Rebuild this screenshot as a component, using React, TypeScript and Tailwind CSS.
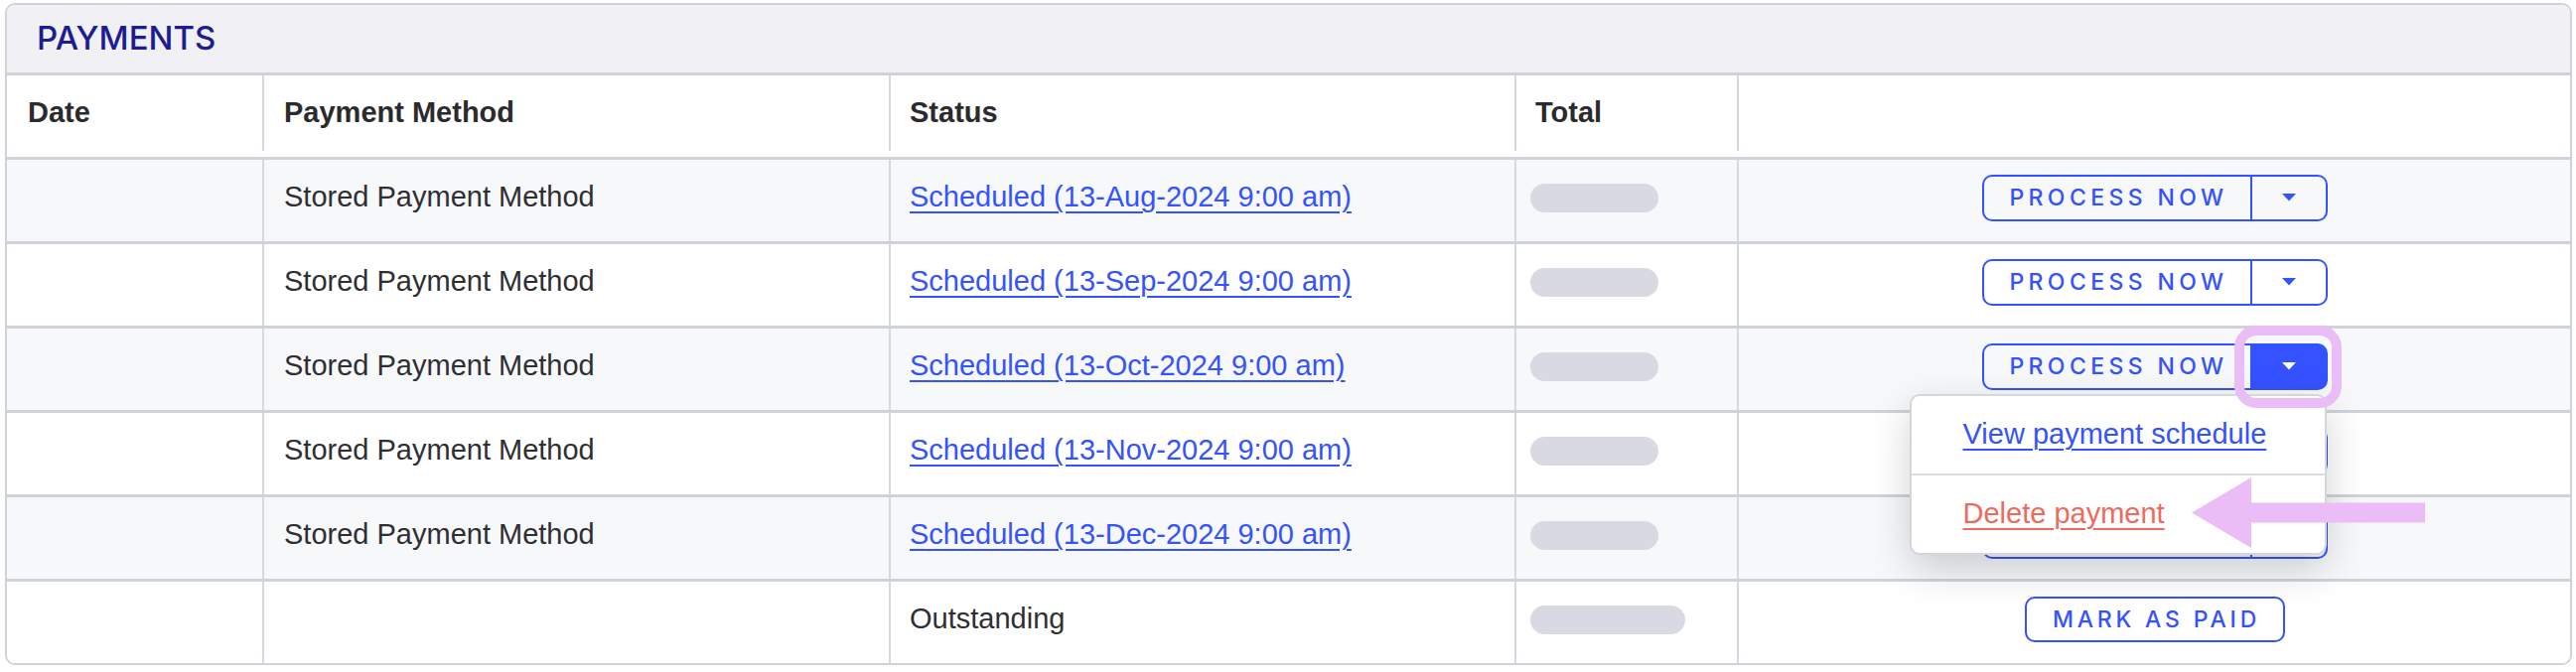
import React from 'react';

type Row = {
  method: string;
  status: string;
  scheduled: boolean;
  open?: boolean;
};

const rows: Row[] = [
  { method: 'Stored Payment Method', status: 'Scheduled (13-Aug-2024 9:00 am)', scheduled: true },
  { method: 'Stored Payment Method', status: 'Scheduled (13-Sep-2024 9:00 am)', scheduled: true },
  { method: 'Stored Payment Method', status: 'Scheduled (13-Oct-2024 9:00 am)', scheduled: true, open: true },
  { method: 'Stored Payment Method', status: 'Scheduled (13-Nov-2024 9:00 am)', scheduled: true },
  { method: 'Stored Payment Method', status: 'Scheduled (13-Dec-2024 9:00 am)', scheduled: true },
  { method: '', status: 'Outstanding', scheduled: false },
];

const Caret = () => (
  <svg width="14" height="8" viewBox="0 0 14 8">
    <path d="M0 0H14L7 7.5Z" fill="currentColor" />
  </svg>
);

const ProcessButton: React.FC<{ open?: boolean }> = ({ open }) => (
  <div className="relative flex h-[47px]">
    <button className="h-full w-[272px] rounded-l-[10px] border-2 border-[#3452ff] pl-[4px] font-['Inter',sans-serif] text-[23px] font-medium tracking-[4.4px] text-[#3452ff]">
      PROCESS NOW
    </button>
    <button
      className={`flex h-full w-[76px] items-center justify-center rounded-r-[10px] border-2 border-l-0 border-[#3452ff] ${
        open ? 'bg-[#3452ff] text-white' : 'text-[#3452ff]'
      }`}
    >
      <Caret />
    </button>

    {open && (
      <>
        {/* dropdown menu */}
        <div className="absolute right-[1px] top-[51px] z-10 h-[162px] w-[420px] rounded-[10px] border-2 border-[#d3d6db] bg-white shadow-[0_14px_40px_rgba(0,0,0,0.18)]">
          <div className="flex h-[78px] items-center pl-[52px]">
            <span className="text-[29px] text-[#3452ff] underline decoration-2 underline-offset-[5px]">
              View payment schedule
            </span>
          </div>
          <div className="flex h-[80px] items-center border-t-2 border-[#d8dce2] pl-[52px]">
            <span className="text-[29px] text-[#ee6a5e] underline decoration-2 underline-offset-[5px]">
              Delete payment
            </span>
          </div>
          {/* annotation arrow */}
          <svg
            className="absolute left-[282px] top-[82px]"
            width="235"
            height="71"
            viewBox="0 0 235 71"
          >
            <path d="M0 35.5L60 0V25.5H235V45.5H60V71Z" fill="#ebbdf6" />
          </svg>
        </div>
        {/* highlight ring */}
        <div className="pointer-events-none absolute left-[254px] top-[-18px] z-20 h-[83px] w-[108px] rounded-[22px] border-[10px] border-[#ebbdf6]" />
      </>
    )}
  </div>
);

export default function App() {
  return (
    <div className="h-[677px] w-[2594px] bg-white pl-[5px] pr-[4px] pt-[3px] font-['Liberation_Sans',Arial,sans-serif] text-[#2f2f33]">
      <div className="rounded-[10px] border-2 border-[#cfd3d9]">
        {/* title band */}
        <div className="flex h-[71px] items-center rounded-t-[8px] border-b-[3px] border-[#cfd3d9] bg-[#f0f0f5] pl-[30px]">
          <h2 className="font-['Inter',sans-serif] text-[33px] font-medium text-[#1d1d8f]">PAYMENTS</h2>
        </div>

        {/* header row */}
        <div className="grid h-[82px] grid-cols-[259px_631px_630px_224px_1fr] bg-white pb-[6px] text-[29px] font-bold text-[#2b2b2e]">
          <div className="flex items-center border-r-2 border-[#d5d8de] pl-[21px]">Date</div>
          <div className="flex items-center border-r-2 border-[#d5d8de] pl-[20px]">Payment Method</div>
          <div className="flex items-center border-r-2 border-[#d5d8de] pl-[19px]">Status</div>
          <div className="flex items-center border-r-2 border-[#d5d8de] pl-[19px]">Total</div>
          <div />
        </div>

        {rows.map((r, i) => (
          <div
            key={i}
            className={`grid h-[85px] grid-cols-[259px_631px_630px_224px_1fr] border-t-[3px] border-[#cfd3d9] text-[29px] ${
              i % 2 === 0 ? 'bg-[#f7f8fa]' : 'bg-white'
            } ${i === rows.length - 1 ? 'rounded-b-[8px]' : ''}`}
          >
            <div className="border-r-2 border-[#d5d8de]" />
            <div className="flex items-center border-r-2 border-[#d5d8de] pb-[6px] pl-[20px]">{r.method}</div>
            <div className="flex items-center border-r-2 border-[#d5d8de] pb-[6px] pl-[19px]">
              {r.scheduled ? (
                <a className="text-[#3452ff] underline decoration-2 underline-offset-[5px]">{r.status}</a>
              ) : (
                <span>{r.status}</span>
              )}
            </div>
            <div className="flex items-center border-r-2 border-[#d5d8de] pb-[6px] pl-[14px]">
              <div
                className={`h-[29px] rounded-full bg-[#d9d9e4] ${r.scheduled ? 'w-[129px]' : 'w-[156px]'}`}
              />
            </div>
            <div className="flex items-center justify-center pb-[6px]">
              {r.scheduled ? (
                <ProcessButton open={r.open} />
              ) : (
                <button className="h-[46px] w-[262px] rounded-[10px] border-2 border-[#3452ff] pl-[4px] font-['Inter',sans-serif] text-[23px] font-medium tracking-[3.8px] text-[#3452ff]">
                  MARK AS PAID
                </button>
              )}
            </div>
          </div>
        ))}
      </div>
    </div>
  );
}
